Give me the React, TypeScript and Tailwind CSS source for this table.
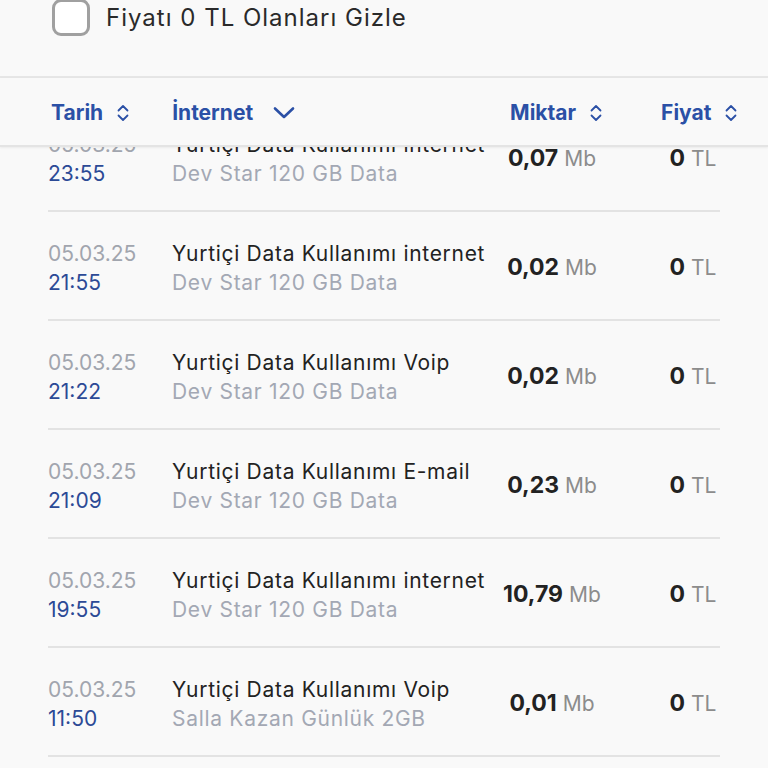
import React from "react";

const rows = [
  { date: "05.03.25", time: "23:55", title: "Yurtiçi Data Kullanımı internet", sub: "Dev Star 120 GB Data", amount: "0,07" },
  { date: "05.03.25", time: "21:55", title: "Yurtiçi Data Kullanımı internet", sub: "Dev Star 120 GB Data", amount: "0,02" },
  { date: "05.03.25", time: "21:22", title: "Yurtiçi Data Kullanımı Voip", sub: "Dev Star 120 GB Data", amount: "0,02" },
  { date: "05.03.25", time: "21:09", title: "Yurtiçi Data Kullanımı E-mail", sub: "Dev Star 120 GB Data", amount: "0,23" },
  { date: "05.03.25", time: "19:55", title: "Yurtiçi Data Kullanımı internet", sub: "Dev Star 120 GB Data", amount: "10,79" },
  { date: "05.03.25", time: "11:50", title: "Yurtiçi Data Kullanımı Voip", sub: "Salla Kazan Günlük 2GB", amount: "0,01" },
];

function UpDown() {
  return (
    <svg width="16" height="20" viewBox="0 0 16 20" fill="none" stroke="#2b50a6" strokeWidth="1.8" strokeLinecap="round" strokeLinejoin="round">
      <path d="M3.5 7.5 L8 3 L12.5 7.5" />
      <path d="M3.5 12.5 L8 17 L12.5 12.5" />
    </svg>
  );
}

function ChevronDown() {
  return (
    <svg width="22" height="14" viewBox="0 0 22 14" fill="none" stroke="#2b50a6" strokeWidth="2.6" strokeLinecap="round" strokeLinejoin="round">
      <path d="M2 2.5 L11 11 L20 2.5" />
    </svg>
  );
}

export default function App() {
  return (
    <div className="w-[768px] h-[768px] overflow-hidden bg-[#f9f9f9] flex flex-col" style={{ fontFamily: "Inter, 'Noto Sans', sans-serif" }}>
      {/* filter */}
      <div className="h-[78px] shrink-0 flex items-start pl-[52px] border-b-2 border-[#e6e6e6]">
        <div className="flex items-center gap-[16px] mt-[-1px]">
          <div className="w-[38px] h-[37px] rounded-[9px] border-[3px] border-[#a0a0a0] bg-white" />
          <span className="text-[24px] leading-[36px] text-[#2a2a2a] tracking-[1px]">Fiyatı 0 TL Olanları Gizle</span>
        </div>
      </div>

      {/* header */}
      <div className="h-[69px] shrink-0 flex items-center border-b-2 border-[#e4e4e4] shadow-[0_1px_2px_rgba(0,0,0,0.06)] relative z-10 bg-[#f9f9f9] pt-[3px]">
        <div className="flex items-center ml-[51px] gap-[12px]">
          <span className="text-[21px] font-bold text-[#2b50a6]">Tarih</span>
          <UpDown />
        </div>
        <div className="flex items-center ml-[41px] gap-[20px]">
          <span className="text-[21px] font-bold text-[#2b50a6]">İnternet</span>
          <ChevronDown />
        </div>
        <div className="flex items-center ml-[215px] gap-[12px]">
          <span className="text-[21px] font-bold text-[#2b50a6]">Miktar</span>
          <UpDown />
        </div>
        <div className="flex items-center ml-[57px] gap-[12px]">
          <span className="text-[21px] font-bold text-[#2b50a6]">Fiyat</span>
          <UpDown />
        </div>
      </div>

      {/* list */}
      <div className="flex-1 overflow-hidden">
        <div className="mt-[-44px] px-[48px]">
          {rows.map((r, i) => (
            <div key={i} className="h-[109px] pt-[4px] flex items-center border-b-2 border-[#e3e3e3]">
              <div className="w-[124px] flex flex-col">
                <span className="text-[21px] leading-[29px] text-[#a1a5ae]">{r.date}</span>
                <span className="text-[21px] leading-[29px] text-[#2c4a96]">{r.time}</span>
              </div>
              <div className="w-[318px] flex flex-col">
                <span className="text-[21px] leading-[29px] text-[#222222] tracking-[0.7px] whitespace-nowrap">{r.title}</span>
                <span className="text-[21px] leading-[29px] text-[#a3a8b4] tracking-[0.7px] whitespace-nowrap">{r.sub}</span>
              </div>
              <div className="w-[124px] flex justify-center items-baseline gap-[6px]">
                <span className="text-[23px] font-bold text-[#222222]">{r.amount}</span>
                <span className="text-[21px] text-[#8c8c8c]">Mb</span>
              </div>
              <div className="w-[52px]" />
              <div className="w-[54px] flex justify-center items-baseline gap-[6px]">
                <span className="text-[23px] font-bold text-[#222222]">0</span>
                <span className="text-[21px] text-[#8c8c8c]">TL</span>
              </div>
            </div>
          ))}
        </div>
      </div>
    </div>
  );
}
